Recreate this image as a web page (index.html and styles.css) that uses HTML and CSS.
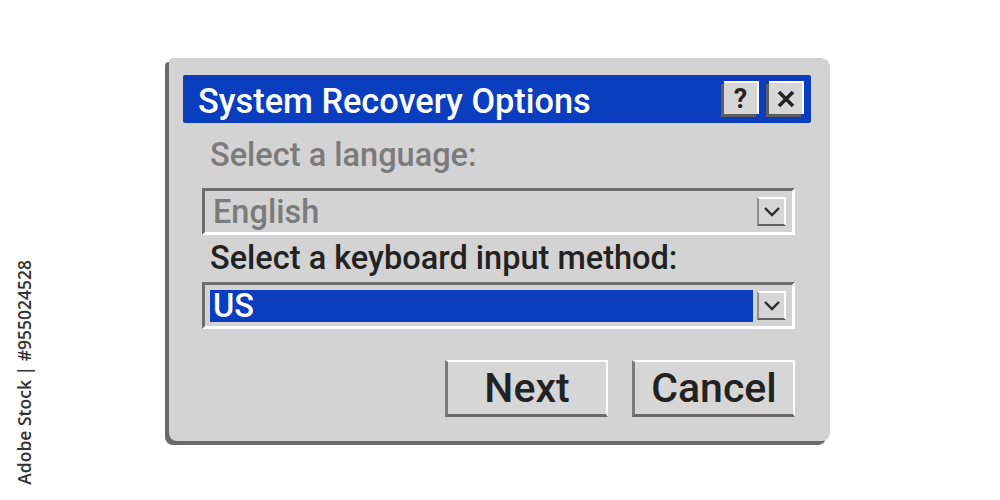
FILE: index.html
```html
<!DOCTYPE html>
<html>
<head>
<meta charset="utf-8">
<link rel="stylesheet" href="styles.css">
</head>
<body>
<div class="stage">
  <div class="watermark">Adobe Stock | #955024528</div>
  <div class="dialog">
    <div class="titlebar">
      <span class="title">System Recovery Options</span>
      <div class="tbtns">
        <div class="tbtn help">?</div>
        <div class="tbtn close">
          <svg width="20" height="20" viewBox="0 0 20 20"><path d="M3 3 L17 17 M17 3 L3 17" stroke="#222" stroke-width="3.6" stroke-linecap="butt" fill="none"/></svg>
        </div>
      </div>
    </div>
    <div class="content">
      <div class="lbl lbl-first disabled">Select a language:</div>
      <div class="combo">
        <div class="value disabled">English</div>
        <div class="dd"><svg width="18" height="11" viewBox="0 0 18 11"><path d="M2 2 L9 9 L16 2" stroke="#2a2a2a" stroke-width="2.4" fill="none"/></svg></div>
      </div>
      <div class="lbl">Select a keyboard input method:</div>
      <div class="combo">
        <div class="value selected">US</div>
        <div class="dd"><svg width="18" height="11" viewBox="0 0 18 11"><path d="M2 2 L9 9 L16 2" stroke="#2a2a2a" stroke-width="2.4" fill="none"/></svg></div>
      </div>
      <div class="actions">
        <div class="btn">Next</div>
        <div class="btn">Cancel</div>
      </div>
    </div>
  </div>
</div>
</body>
</html>
```
FILE: styles.css
```css
html, body {
  margin: 0;
  padding: 0;
  background: #ffffff;
}
.stage {
  position: relative;
  width: 1000px;
  height: 500px;
  padding: 58px 0 0 169px;
  box-sizing: border-box;
  font-family: Roboto, "Liberation Sans", sans-serif;
}
.watermark {
  position: absolute;
  left: 12px;
  bottom: 15px;
  writing-mode: vertical-rl;
  transform: rotate(180deg);
  font-family: "Open Sans", sans-serif;
  font-weight: 600;
  font-size: 17.5px;
  color: #333333;
}
.dialog {
  width: 661px;
  height: 383px;
  background: #d3d3d3;
  border-radius: 4px 9px 8px 8px;
  box-shadow: -4px 4px 0 #6a6a6a;
  padding: 17px 19px 0 14px;
  box-sizing: border-box;
}
.titlebar {
  height: 48px;
  background: #0b3ebf;
  border-radius: 2px;
  display: flex;
  align-items: center;
  justify-content: space-between;
  padding: 0 7px 0 15px;
}
.title {
  color: #ffffff;
  font-size: 34.3px;
  font-weight: 500;
  line-height: 48px;
  padding-top: 3px;
}
.tbtns {
  display: flex;
  gap: 10px;
  align-items: center;
}
.tbtn {
  width: 35px;
  height: 33px;
  box-sizing: border-box;
  background: #d6d6d6;
  border-top: 2px solid #ffffff;
  border-right: 2px solid #ffffff;
  box-shadow: -3px 3px 0 #5e5e5e;
  display: flex;
  align-items: center;
  justify-content: center;
  color: #222;
  font-weight: 700;
  font-size: 27px;
  margin-top: -3px;
}
.content {
  padding-left: 19px;
  display: flex;
  flex-direction: column;
}
.lbl {
  font-size: 32.5px;
  font-weight: 500;
  line-height: 47px;
  color: #222222;
  padding-left: 8px;
}
.lbl-first {
  margin: 9px 0 9px;
}
.disabled {
  color: #7b7b7b;
}
.combo {
  width: 593px;
  height: 47px;
  box-sizing: border-box;
  border-style: solid;
  border-width: 3px;
  border-color: #6d6d6d #ffffff #ffffff #6d6d6d;
  display: flex;
  align-items: center;
  padding: 0 6px 0 5px;
  gap: 4px;
}
.value {
  flex: 1;
  height: 32px;
  font-size: 32.5px;
  font-weight: 500;
  line-height: 32px;
  padding-left: 3px;
}
.selected {
  background: #0b3ebf;
  color: #ffffff;
}
.dd {
  width: 29px;
  height: 29px;
  box-sizing: border-box;
  background: #d6d6d6;
  border-style: solid;
  border-width: 2px;
  border-color: #ffffff #ffffff #606060 #909090;
  display: flex;
  align-items: center;
  justify-content: center;
}
.actions {
  display: flex;
  justify-content: flex-end;
  gap: 24px;
  width: 593px;
  margin-top: 31px;
}
.btn {
  width: 163px;
  height: 57px;
  box-sizing: border-box;
  background: #d6d6d6;
  border-style: solid;
  border-width: 2px 2px 3px 3px;
  border-color: #ffffff #ffffff #6a6a6a #7a7a7a;
  display: flex;
  align-items: center;
  justify-content: center;
  font-size: 41px;
  font-weight: 500;
  color: #222222;
}
```
